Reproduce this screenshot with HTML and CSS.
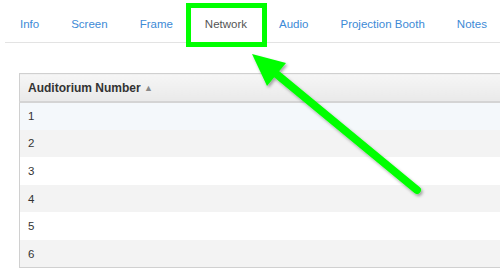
FILE: index.html
```html
<!DOCTYPE html>
<html>
<head>
<meta charset="utf-8">
<link rel="stylesheet" href="styles.css">
</head>
<body>
<div class="page">
  <ul class="tabs">
    <li><a>Info</a></li>
    <li><a>Screen</a></li>
    <li><a>Frame</a></li>
    <li class="active"><a>Network</a></li>
    <li><a>Audio</a></li>
    <li><a>Projection Booth</a></li>
    <li><a>Notes</a></li>
  </ul>
  <table class="grid">
    <thead>
      <tr><th>Auditorium Number <span class="sort">&#9650;</span></th></tr>
    </thead>
    <tbody>
      <tr class="hl"><td>1</td></tr>
      <tr class="alt"><td>2</td></tr>
      <tr><td>3</td></tr>
      <tr class="alt"><td>4</td></tr>
      <tr><td>5</td></tr>
      <tr class="alt"><td>6</td></tr>
    </tbody>
  </table>
  <svg class="annot" width="500" height="269" viewBox="0 0 500 269">
    <defs>
      <filter id="sh" x="-20%" y="-20%" width="140%" height="140%">
        <feDropShadow dx="1.5" dy="2" stdDeviation="1.5" flood-color="#000" flood-opacity="0.35"/>
      </filter>
    </defs>
    <rect x="188.5" y="5.5" width="76" height="39" fill="none" stroke="#00ff00" stroke-width="5"/>
    <g filter="url(#sh)">
      <line x1="417" y1="190" x2="274" y2="72" stroke="#00ff00" stroke-width="8" stroke-linecap="round"/>
      <polygon points="252,54 286,63 267,86" fill="#00ff00"/>
    </g>
  </svg>
</div>
</body>
</html>
```

FILE: styles.css
```css
html, body {
  margin: 0;
  padding: 0;
  background: #fff;
  overflow: hidden;
}
.page {
  position: relative;
  width: 500px;
  height: 269px;
  overflow: hidden;
  font-family: "Liberation Sans", Arial, sans-serif;
  font-size: 11.5px;
}
.tabs {
  list-style: none;
  margin: 0 0 0 5px;
  padding: 6px 0 0 0;
  display: flex;
  border-bottom: 1px solid #e3e3e3;
  white-space: nowrap;
}
.tabs li {
  margin-right: 2px;
}
.tabs a {
  display: block;
  padding: 10px 15px;
  line-height: 16px;
  color: #3d8ad6;
}
.tabs .active a {
  color: #555;
}
.grid {
  margin: 30px 0 0 19px;
  width: 481px;
  border-collapse: collapse;
  border: 1px solid #d0d0d0;
  border-right: none;
  color: #333;
}
.grid th {
  text-align: left;
  font-weight: bold;
  font-size: 12px;
  height: 27px;
  padding: 0 8px;
  background: linear-gradient(#f6f6f6, #e9e9e9);
  border-bottom: 2px solid #d4d4d4;
}
.sort {
  font-size: 9px;
  color: #888;
  vertical-align: 1px;
}
.grid td {
  height: 27.6px;
  padding: 0 8px;
  box-sizing: border-box;
}
.grid .hl td {
  background: #f4f8fb;
}
.grid .alt td {
  background: #f3f3f3;
}
.annot {
  position: absolute;
  left: 0;
  top: 0;
}
```
